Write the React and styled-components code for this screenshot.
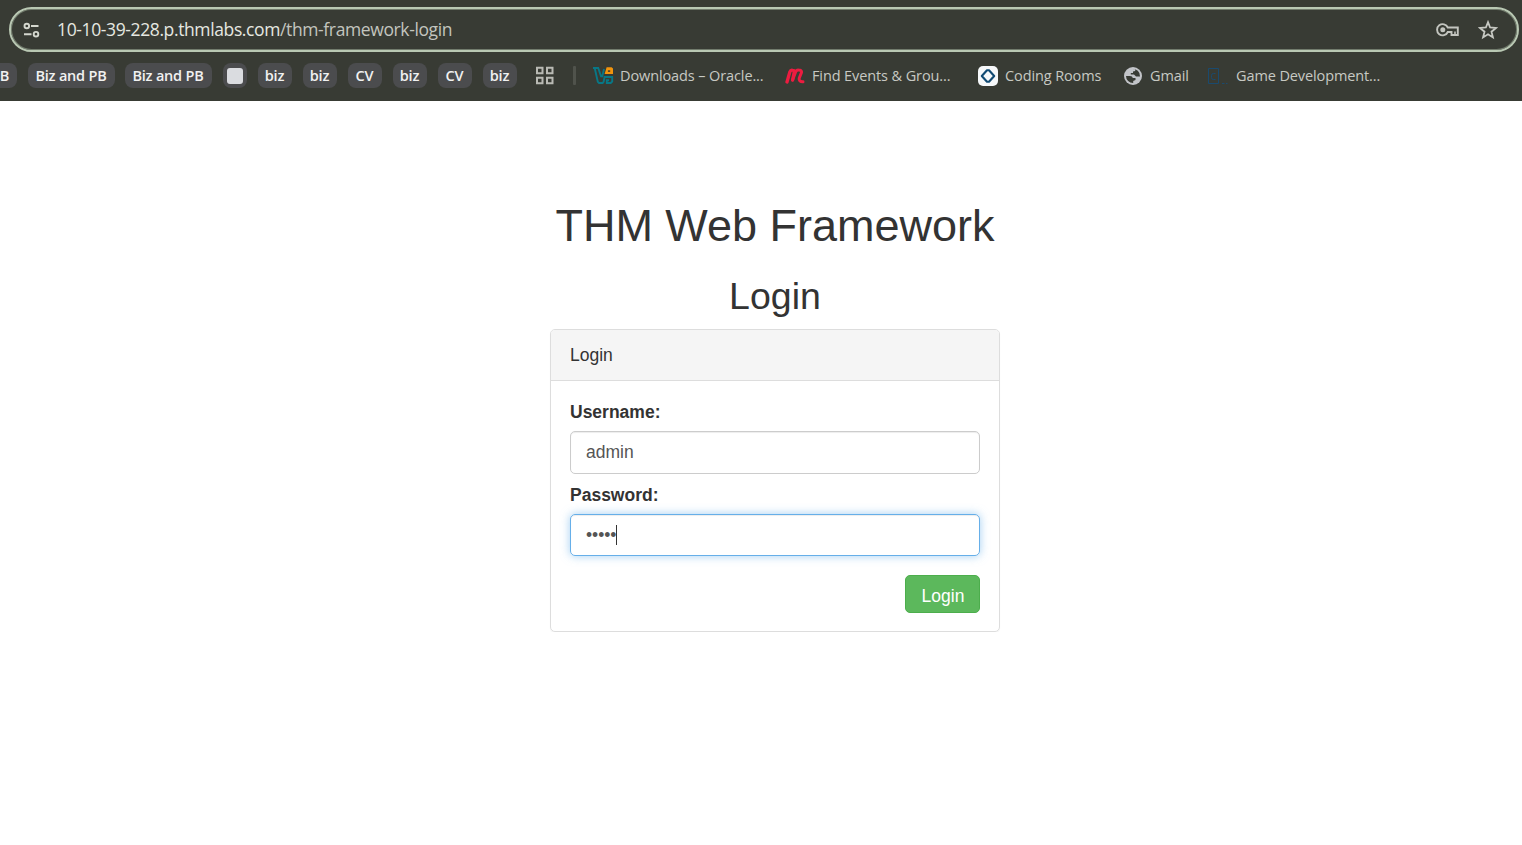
import React from "react";
import styled, { createGlobalStyle } from "styled-components";

const GlobalStyle = createGlobalStyle`
  * { box-sizing: border-box; }
  body {
    margin: 0;
    background: #fff;
    color: #333;
    font-family: "Liberation Sans", Arial, sans-serif;
    font-size: 17.5px;
    line-height: 25px;
    overflow: hidden;
  }
`;

const Browser = styled.header`
  height: 101px;
  padding: 7px 3px 0 9px;
  background: #383b34;
  font-family: "Open Sans", "Noto Sans", sans-serif;
  overflow: hidden;
`;

const AddressBar = styled.div`
  display: flex;
  align-items: center;
  height: 45px;
  padding: 0 19px 0 12px;
  border: 2px solid #b9c8b3;
  border-radius: 23px;
  box-shadow: inset 0 0 0 1px #727c6d;
  color: #c9ccc4;
`;

const Url = styled.div`
  flex: 1;
  margin-left: 17px;
  font-size: 17.5px;
  letter-spacing: -0.38px;
  color: #c3c5bf;
  white-space: nowrap;
`;

const Host = styled.span`
  color: #e6e8e1;
`;

const BarActions = styled.div`
  display: flex;
  align-items: center;
  gap: 18px;
`;

const Bookmarks = styled.nav`
  display: flex;
  align-items: center;
  height: 25px;
  margin: 11px 0 0 -9px;
  white-space: nowrap;
`;

const Chip = styled.span`
  display: flex;
  flex: none;
  align-items: center;
  justify-content: ${(p) => (p.$cut ? "flex-end" : "center")};
  width: ${(p) => p.$w}px;
  height: 25px;
  margin-right: ${(p) => p.$gap || 11}px;
  padding-right: ${(p) => (p.$cut ? "8px" : "1px")};
  border-radius: ${(p) => (p.$cut ? "0 8px 8px 0" : "8px")};
  background: #4b4c4e;
  color: #f1f1f1;
  font-size: 14.5px;
  font-weight: 600;
  letter-spacing: -0.2px;
`;

const Square = styled.span`
  width: 16px;
  height: 16px;
  border-radius: 3px;
  background: #dadce0;
`;

const Apps = styled.span`
  display: grid;
  flex: none;
  margin-left: 7px;
`;

const Divider = styled.span`
  width: 3px;
  height: 19px;
  margin: 0 17px 0 18px;
  border-radius: 1px;
  background: #50534c;
`;

const Bookmark = styled.span`
  display: flex;
  flex: none;
  align-items: center;
  width: ${(p) => p.$w}px;
  color: #c7c9c3;
  font-size: 14.5px;
  letter-spacing: -0.11px;

  svg {
    flex: none;
    margin-right: ${(p) => p.$gap || 6}px;
  }
`;

const Page = styled.main`
  display: flex;
  flex-direction: column;
  align-items: center;
  width: 450px;
  margin: 0 auto 0 550px;
  padding-top: 100px;
`;

const Title = styled.h1`
  margin: 0;
  font-size: 45px;
  font-weight: 400;
  line-height: 50px;
  white-space: nowrap;
`;

const Subtitle = styled.h2`
  margin: 24px 0 12px;
  font-size: 37.5px;
  font-weight: 400;
  line-height: 42px;
`;

const Panel = styled.section`
  width: 450px;
  height: 303px;
  border: 1px solid #ddd;
  border-radius: 5px;
  box-shadow: 0 1px 1px rgba(0, 0, 0, 0.05);
`;

const PanelHeading = styled.div`
  height: 51px;
  padding: 13px 19px 11px;
  border-bottom: 1px solid #ddd;
  border-radius: 4px 4px 0 0;
  background: #f5f5f5;
`;

const Form = styled.form`
  display: flex;
  flex-direction: column;
  padding: 19px 19px 18px;
`;

const Label = styled.label`
  height: 25px;
  margin-bottom: 6px;
  font-weight: 700;
`;

const Field = styled.div`
  display: flex;
  align-items: center;
  height: ${(p) => (p.$focused ? 42 : 43)}px;
  margin-bottom: ${(p) => (p.$focused ? 19 : 9)}px;
  padding: 0 15px;
  border: 1px solid ${(p) => (p.$focused ? "#66afe9" : "#ccc")};
  border-radius: 5px;
  color: #555;
  box-shadow: inset 0 1px 1px rgba(0, 0, 0, 0.075)${(p) => (p.$focused ? ", 0 0 10px rgba(102, 175, 233, 0.6)" : "")};
`;

const Dots = styled.span`
  letter-spacing: -0.05px;
`;

const Caret = styled.span`
  width: 1px;
  height: 20px;
  background: #333;
`;

const LoginButton = styled.button`
  align-self: flex-end;
  width: 75px;
  height: 38px;
  padding: 4px 0 0 1px;
  border: 1px solid #4cae4c;
  border-radius: 5px;
  background: #5cb85c;
  color: #fff;
  font: 17.5px/25px "Liberation Sans", Arial, sans-serif;
`;

const TuneIcon = () => (
  <svg width="17" height="16" viewBox="0 0 17 16" fill="none" stroke="#d4d7ce" strokeWidth="1.9">
    <circle cx="3.8" cy="4" r="2.3" />
    <path d="M8 4h7.5M1 12.2h7.5" />
    <circle cx="13" cy="12.2" r="2.3" />
  </svg>
);

const KeyIcon = () => (
  <svg width="24" height="16" viewBox="0 0 24 16" fill="none" stroke="#c3c5bf" strokeWidth="1.9">
    <path d="M11.8 5.5A5.6 5.6 0 1 0 11.8 10H15.5V13H21.8V5.5Z" />
    <circle cx="6.8" cy="7.7" r="2.5" fill="#c3c5bf" stroke="none" />
    <path d="M19 9.5V13" strokeWidth="1.6" />
  </svg>
);

const StarIcon = () => (
  <svg width="20" height="20" viewBox="0 0 20 20" fill="none" stroke="#c7c9c3" strokeWidth="1.8">
    <path d="M10 2.2l2.1 5.3 5.9.4-4.5 3.8 1.4 5.7L10 14.3l-4.9 3.1 1.4-5.7L2 7.9l5.9-.4Z" />
  </svg>
);

const GridIcon = () => (
  <svg width="20" height="20" viewBox="0 0 20 20" fill="none" stroke="#b9bab4" strokeWidth="2">
    <path d="M2 1.7h5.5v5.5H2zM12 1.7h5.5v5.5H12zM2 11.8h5.5v5.5H2zM12 11.8h5.5v5.5H12z" />
  </svg>
);

const BoxIcon = () => (
  <svg width="21" height="20" viewBox="0 0 21 20" fill="none" strokeWidth="1.9">
    <path d="M0 2H5.2L8 10.2H9.3L11 3M1.7 2L4.8 15.8L6 17H9.6L10.6 15.8L11.6 11H19.2V15.5L17.7 17H13.8V14.2H16" stroke="#087786" />
    <path d="M11.6 8L13.6 1.3H18.6L20 2.6V8Z" fill="#f1940d" stroke="none" />
    <path d="M14.9 5.1H17.2" stroke="#383b34" strokeWidth="1.5" />
  </svg>
);

const MeetupIcon = () => (
  <svg width="20" height="18" viewBox="0 0 20 18" fill="none" stroke="#ed1c40" strokeLinecap="round" strokeLinejoin="round">
    <path d="M2 15L4.9 4.8Q5.6 2.8 7.4 3.1Q9.8 3.4 9.2 5L7.6 13" strokeWidth="3.3" />
    <path d="M7.6 13L10.5 5.3Q11.5 2.8 13.5 3Q17 3 16.5 5.5L14.2 11.3Q13.6 14.8 18 14.7" strokeWidth="3" />
  </svg>
);

const CodingIcon = () => (
  <svg width="20" height="20" viewBox="0 0 20 20">
    <rect width="20" height="20" rx="5" fill="#f6f8fa" />
    <path d="M9 4.2h2L16.2 10L11 15.8H9L3.8 10Z" fill="none" stroke="#114a73" strokeWidth="2.1" strokeLinejoin="round" />
  </svg>
);

const GlobeIcon = () => (
  <svg width="18" height="18" viewBox="0 0 18 18">
    <circle cx="9" cy="9" r="9" fill="#c2c4c8" />
    <path d="M2 9H6Q8.5 9 8.8 11H11.5V13L9.2 14V16A7 7 0 0 1 2 9ZM8 2Q10 1.8 11.2 2.4V4L9 4.5V6H6.8V7.4H10L12 9.5H16A7 7 0 0 0 8 2Z" fill="#383b34" />
  </svg>
);

const CourseIcon = () => (
  <svg width="20" height="20" viewBox="0 0 20 20" fill="none" stroke="#1a4a6e" strokeWidth="1">
    <path d="M0.5 2.5h10v15h-10zM7.5 7.5h-2q-2 0-2 2v2q0 2 2 2h2M14 17.5h2.5M18 17.5h1.5" />
  </svg>
);

const chips = [
  { text: "B", w: 17, cut: true },
  { text: "Biz and PB", w: 87, gap: 10 },
  { text: "Biz and PB", w: 87 },
  { w: 24 },
  { text: "biz", w: 34 },
  { text: "biz", w: 34 },
  { text: "CV", w: 34 },
  { text: "biz", w: 34 },
  { text: "CV", w: 34 },
  { text: "biz", w: 34 },
];

export default function App() {
  return (
    <>
      <GlobalStyle />
      <Browser>
        <AddressBar>
          <TuneIcon />
          <Url>
            <Host>10-10-39-228.p.thmlabs.com</Host>/thm-framework-login
          </Url>
          <BarActions>
            <KeyIcon />
            <StarIcon />
          </BarActions>
        </AddressBar>
        <Bookmarks>
          {chips.map((chip, i) => (
            <Chip key={i} $w={chip.w} $cut={chip.cut} $gap={chip.gap}>
              {chip.text || <Square />}
            </Chip>
          ))}
          <Apps><GridIcon /></Apps>
          <Divider />
          <Bookmark $w={192}><BoxIcon />Downloads – Oracle...</Bookmark>
          <Bookmark $w={193} $gap={7}><MeetupIcon />Find Events &amp; Grou...</Bookmark>
          <Bookmark $w={146} $gap={7}><CodingIcon />Coding Rooms</Bookmark>
          <Bookmark $w={84} $gap={8}><GlobeIcon />Gmail</Bookmark>
          <Bookmark $w={180} $gap={8}><CourseIcon />Game Development...</Bookmark>
        </Bookmarks>
      </Browser>
      <Page>
        <Title>THM Web Framework</Title>
        <Subtitle>Login</Subtitle>
        <Panel>
          <PanelHeading>Login</PanelHeading>
          <Form onSubmit={(e) => e.preventDefault()}>
            <Label>Username:</Label>
            <Field>admin</Field>
            <Label>Password:</Label>
            <Field $focused>
              <Dots>•••••</Dots>
              <Caret />
            </Field>
            <LoginButton type="submit">Login</LoginButton>
          </Form>
        </Panel>
      </Page>
    </>
  );
}
